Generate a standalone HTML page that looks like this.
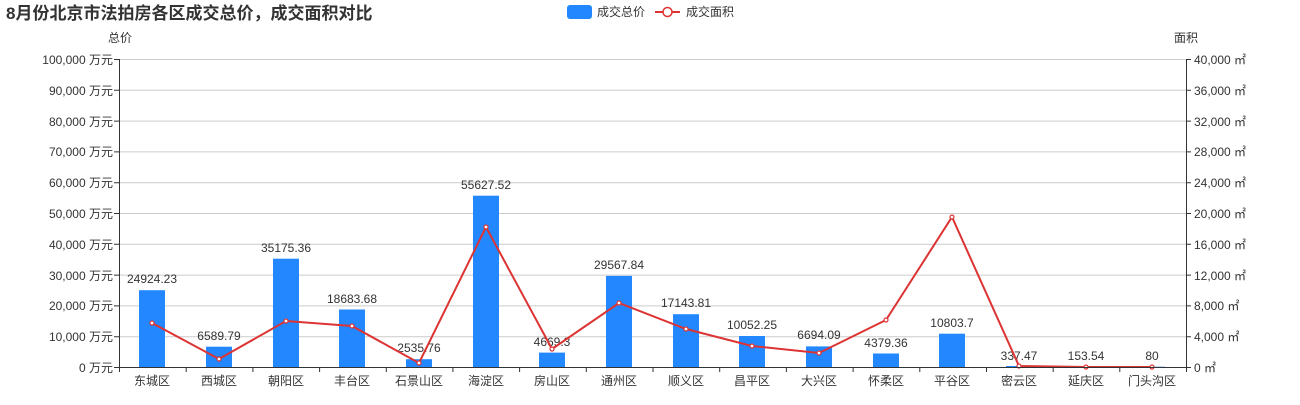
<!DOCTYPE html><html><head><meta charset="utf-8"><style>body{margin:0;background:#fff;width:1300px;height:400px;overflow:hidden}svg{font-family:"Liberation Sans","Noto Sans CJK SC",sans-serif}</style></head><body>
<svg width="1300" height="400" xmlns="http://www.w3.org/2000/svg">
<text x="6" y="19" font-size="17" font-weight="bold" fill="#333">8月份北京市法拍房各区成交总价，成交面积对比</text>
<rect x="567" y="5" width="25" height="14" rx="3" fill="#2388ff"/>
<text x="597" y="16" font-size="12" fill="#333">成交总价</text>
<line x1="655" y1="12" x2="680" y2="12" stroke="#d33" stroke-width="2"/><circle cx="667.5" cy="12" r="4.5" fill="#fff" stroke="#d33" stroke-width="1.5"/>
<text x="686" y="16" font-size="12" fill="#333">成交面积</text>
<text x="108" y="42" font-size="12" fill="#333">总价</text>
<text x="1174" y="42" font-size="12" fill="#333">面积</text>
<g stroke="#ccc" stroke-width="1">
<line x1="119" y1="59.5" x2="1186" y2="59.5"/><line x1="119" y1="90.3" x2="1186" y2="90.3"/><line x1="119" y1="121.1" x2="1186" y2="121.1"/><line x1="119" y1="151.9" x2="1186" y2="151.9"/><line x1="119" y1="182.7" x2="1186" y2="182.7"/><line x1="119" y1="213.5" x2="1186" y2="213.5"/><line x1="119" y1="244.3" x2="1186" y2="244.3"/><line x1="119" y1="275.1" x2="1186" y2="275.1"/><line x1="119" y1="305.9" x2="1186" y2="305.9"/><line x1="119" y1="336.7" x2="1186" y2="336.7"/>
</g>
<g font-size="12" fill="#333" text-anchor="end">
<text x="113" y="64">100,000 万元</text><text x="113" y="95">90,000 万元</text><text x="113" y="126">80,000 万元</text><text x="113" y="156">70,000 万元</text><text x="113" y="187">60,000 万元</text><text x="113" y="218">50,000 万元</text><text x="113" y="249">40,000 万元</text><text x="113" y="280">30,000 万元</text><text x="113" y="310">20,000 万元</text><text x="113" y="341">10,000 万元</text><text x="113" y="372">0 万元</text>
</g>
<g font-size="12" fill="#333">
<text x="1194" y="64">40,000 ㎡</text><text x="1194" y="95">36,000 ㎡</text><text x="1194" y="126">32,000 ㎡</text><text x="1194" y="156">28,000 ㎡</text><text x="1194" y="187">24,000 ㎡</text><text x="1194" y="218">20,000 ㎡</text><text x="1194" y="249">16,000 ㎡</text><text x="1194" y="280">12,000 ㎡</text><text x="1194" y="310">8,000 ㎡</text><text x="1194" y="341">4,000 ㎡</text><text x="1194" y="372">0 ㎡</text>
</g>
<g fill="#2388ff">
<rect x="139" y="290.2" width="26" height="76.8"/><rect x="206" y="346.7" width="26" height="20.3"/><rect x="273" y="258.7" width="26" height="108.3"/><rect x="339" y="309.5" width="26" height="57.5"/><rect x="406" y="359.2" width="26" height="7.8"/><rect x="473" y="195.7" width="26" height="171.3"/><rect x="539" y="352.6" width="26" height="14.4"/><rect x="606" y="275.9" width="26" height="91.1"/><rect x="673" y="314.2" width="26" height="52.8"/><rect x="739" y="336" width="26" height="31"/><rect x="806" y="346.4" width="26" height="20.6"/><rect x="873" y="353.5" width="26" height="13.5"/><rect x="939" y="333.7" width="26" height="33.3"/><rect x="1006" y="366" width="26" height="1"/><rect x="1073" y="366.5" width="26" height="0.5"/><rect x="1139" y="366.7" width="26" height="0.3"/>
</g>
<g font-size="12" fill="#333" text-anchor="middle">
<text x="152" y="283">24924.23</text><text x="219" y="340">6589.79</text><text x="286" y="252">35175.36</text><text x="352" y="303">18683.68</text><text x="419" y="352">2535.76</text><text x="486" y="189">55627.52</text><text x="552" y="346">4669.3</text><text x="619" y="269">29567.84</text><text x="686" y="307">17143.81</text><text x="752" y="329">10052.25</text><text x="819" y="339">6694.09</text><text x="886" y="347">4379.36</text><text x="952" y="327">10803.7</text><text x="1019" y="360">337.47</text><text x="1086" y="360">153.54</text><text x="1152" y="360">80</text>
</g>
<polyline fill="none" stroke="#d33" stroke-width="2" points="152,323 219,359 286,321 352,326 419,363 486,227 552,349 619,303 686,329 752,346 819,353 886,320 952,217 1019,366 1086,367 1152,367"/>
<g fill="#fff" stroke="#d33" stroke-width="1.2">
<circle cx="152" cy="323" r="2"/><circle cx="219" cy="359" r="2"/><circle cx="286" cy="321" r="2"/><circle cx="352" cy="326" r="2"/><circle cx="419" cy="363" r="2"/><circle cx="486" cy="227" r="2"/><circle cx="552" cy="349" r="2"/><circle cx="619" cy="303" r="2"/><circle cx="686" cy="329" r="2"/><circle cx="752" cy="346" r="2"/><circle cx="819" cy="353" r="2"/><circle cx="886" cy="320" r="2"/><circle cx="952" cy="217" r="2"/><circle cx="1019" cy="366" r="2"/><circle cx="1086" cy="367" r="2"/><circle cx="1152" cy="367" r="2"/>
</g>
<g stroke="#333" stroke-width="1">
<line x1="119.5" y1="59" x2="119.5" y2="367"/><line x1="1186.5" y1="59" x2="1186.5" y2="367"/><line x1="119" y1="367.5" x2="1186" y2="367.5"/>
<path d="M114 59.5h5M114 90.3h5M114 121.1h5M114 151.9h5M114 182.7h5M114 213.5h5M114 244.3h5M114 275.1h5M114 305.9h5M114 336.7h5M114 367.5h5"/>
<path d="M1186 59.5h5M1186 90.3h5M1186 121.1h5M1186 151.9h5M1186 182.7h5M1186 213.5h5M1186 244.3h5M1186 275.1h5M1186 305.9h5M1186 336.7h5M1186 367.5h5"/>
<path d="M119.5 367v5M186.2 367v5M252.9 367v5M319.6 367v5M386.3 367v5M452.9 367v5M519.6 367v5M586.3 367v5M653 367v5M719.7 367v5M786.4 367v5M853.1 367v5M919.8 367v5M986.5 367v5M1053.2 367v5M1119.8 367v5M1186.5 367v5"/>
</g>
<g font-size="12" fill="#333" text-anchor="middle">
<text x="152" y="385">东城区</text><text x="219" y="385">西城区</text><text x="286" y="385">朝阳区</text><text x="352" y="385">丰台区</text><text x="419" y="385">石景山区</text><text x="486" y="385">海淀区</text><text x="552" y="385">房山区</text><text x="619" y="385">通州区</text><text x="686" y="385">顺义区</text><text x="752" y="385">昌平区</text><text x="819" y="385">大兴区</text><text x="886" y="385">怀柔区</text><text x="952" y="385">平谷区</text><text x="1019" y="385">密云区</text><text x="1086" y="385">延庆区</text><text x="1152" y="385">门头沟区</text>
</g>
</svg>
</body></html>
